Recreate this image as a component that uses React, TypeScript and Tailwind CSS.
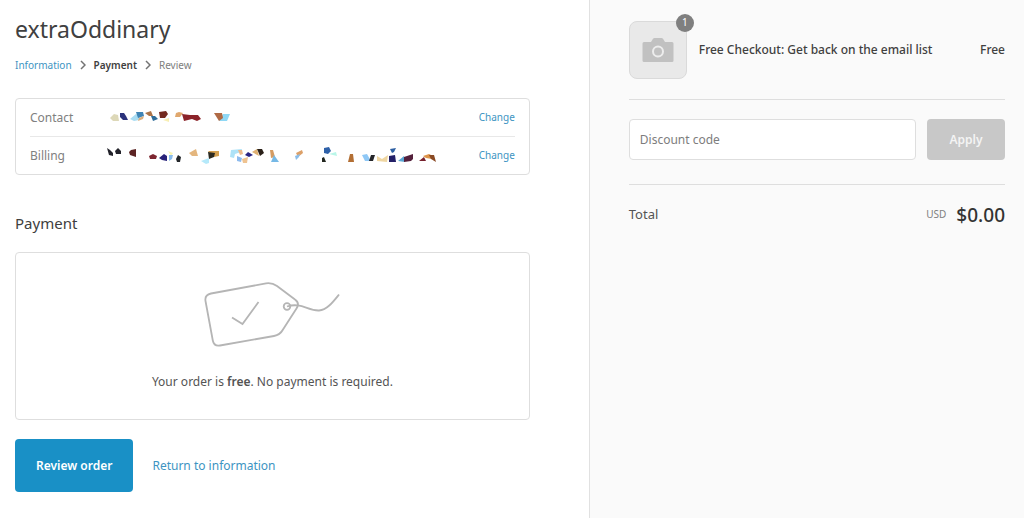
import React from "react";

type Shard = { points: string; fill: string };

const contactShards: Shard[] = [
  { points: "2,9 6,5 10,6 11,12 5,12", fill: "#ddd8b8" },
  { points: "12,4 16,4 18,7 20,11 15,11 12,8", fill: "#2c337c" },
  { points: "22,10 28,5 33,7 31,11 26,12", fill: "#a9dcf2" },
  { points: "28,3 35,3 36,7 30,9", fill: "#3f84b5" },
  { points: "31,9 36,7 35,10 30,12", fill: "#dcae7c" },
  { points: "37,4 43,2 45,7 41,7", fill: "#ad7448" },
  { points: "43,7 47,7 50,10 45,12", fill: "#2f6c99" },
  { points: "51,3 58,2 60,5 57,9 52,9", fill: "#74291f" },
  { points: "55,11 61,9 61,13", fill: "#f8efb4" },
  { points: "67,8 68,4 71,3 75,4 72,8", fill: "#e0a86e" },
  { points: "74,5 82,6 90,6 93,10 89,12 84,10 76,12", fill: "#8b2329" },
  { points: "111,12 115,5 122,5 119,12", fill: "#8fd8f5" },
  { points: "106,4 114,4 115,9 111,12", fill: "#b06a45" },
];

const billingShards: Shard[] = [
  { points: "-1,1 2,3 5,6 5,9 1,8", fill: "#22222a" },
  { points: "7,4 10,1 13,4 13,7 8,7", fill: "#22222a" },
  { points: "21,5 23,3 28,2 28,10 22,8", fill: "#5c2524" },
  { points: "41,9 45,7 49,9 48,12 42,12", fill: "#7d2630" },
  { points: "51,11 56,7 59,9 59,14 54,13", fill: "#29227a" },
  { points: "60,4 65,6 63,9", fill: "#faf5b5" },
  { points: "61,8 65,8 64,12 61,14", fill: "#8bbdec" },
  { points: "68,12 70,8 73,10 72,15 69,15", fill: "#24272b" },
  { points: "81,6 88,2 90,9 84,9", fill: "#e4b67e" },
  { points: "100,4 111,4 111,9 106,10", fill: "#d3a050" },
  { points: "100,5 107,6 106,10 101,12", fill: "#2c2a20" },
  { points: "93,14 101,11 101,16 98,17", fill: "#b5e9fa" },
  { points: "122,10 123,3 134,2 133,5 127,7 126,11", fill: "#aee2f7" },
  { points: "129,9 134,11 133,15 129,14", fill: "#8ebbee" },
  { points: "130,3 134,3 135,7 132,8", fill: "#edb98a" },
  { points: "134,12 140,10 139,16 135,16", fill: "#efc391" },
  { points: "137,8 140,5 145,8 141,10", fill: "#2b2484" },
  { points: "144,5 149,2 151,9", fill: "#dfb071" },
  { points: "149,2 154,2 156,6 152,9", fill: "#2a2018" },
  { points: "162,3 165,3 167,10 163,11", fill: "#d59c63" },
  { points: "166,8 171,15 163,15", fill: "#76b9e6" },
  { points: "188,6 194,3 195,6 190,10", fill: "#dca068" },
  { points: "187,9 192,7 191,10 188,13", fill: "#8abdea" },
  { points: "216,1 221,0 223,4 220,7 216,6", fill: "#2f61a9" },
  { points: "221,7 228,5 229,9", fill: "#b9f6e8" },
  { points: "214,15 214,11 216,10 218,15", fill: "#22261f" },
  { points: "240,15 242,7 245,7 246,15", fill: "#b36f34" },
  { points: "254,8 259,7 263,14 257,14", fill: "#8fc8f6" },
  { points: "261,14 263,8 267,8 265,14", fill: "#25262a" },
  { points: "269,14 269,9 274,12 280,8 279,15", fill: "#efd6a2" },
  { points: "282,2 288,1 286,5 284,6", fill: "#2d5fa2" },
  { points: "281,9 287,8 288,15 281,15", fill: "#242067" },
  { points: "290,14 296,9 297,15", fill: "#5ba6d3" },
  { points: "296,10 305,7 305,12 303,14 296,15", fill: "#54203c" },
  { points: "311,14 316,10 318,14", fill: "#76202c" },
  { points: "315,9 321,7 325,9 324,12 318,11", fill: "#dd9348" },
  { points: "321,8 326,8 328,15 323,12", fill: "#8a4a25" },
];

const Shards: React.FC<{ items: Shard[] }> = ({ items }) => (
  <svg
    width="332"
    height="18"
    viewBox="0 0 332 18"
    className="shrink-0 overflow-visible"
    aria-hidden="true"
  >
    {items.map((item) => (
      <polygon key={item.points} points={item.points} fill={item.fill} />
    ))}
  </svg>
);

const Chevron: React.FC = () => (
  <svg width="6" height="10" viewBox="0 0 6 10" fill="none" aria-hidden="true">
    <path d="M1 1l4 4-4 4" stroke="#737373" strokeWidth="1.5" />
  </svg>
);

const PriceTag: React.FC = () => (
  <svg
    width="136"
    height="66"
    viewBox="0 0 136 66"
    fill="none"
    stroke="#b5b5b5"
    strokeWidth="1.8"
    aria-hidden="true"
  >
    <path d="M7 11.5 62 1.4Q68 0.5 73 4L91 17.5Q96 21 92.500 26.500L79 47.500Q76 53 70 54L16 63.500Q10 64.500 8.800 58.500L1.500 19Q.5 13 7 11.500Z" />
    <circle cx="83" cy="24.500" r="3.300" />
    <path d="M83 24.500C97 20 104 29 115 28.500C123 28 129 20 135 12.500" />
    <path d="M28 35.500 38.500 42 54.500 20" />
  </svg>
);

const Camera: React.FC = () => (
  <svg width="32" height="24" viewBox="0 0 32 24" aria-hidden="true">
    <path
      d="M2 4h7l2-3.200Q11.500 0 12.500 0h7Q20.500 0 21 .8L23 4h7q1.500 0 1.500 1.500v17Q31.500 24 30 24H2Q.5 24 .5 22.500v-17Q.5 4 2 4Z"
      fill="#c1c1c1"
    />
    <circle cx="16" cy="13.500" r="5" fill="#c1c1c1" stroke="#ededed" strokeWidth="2" />
  </svg>
);

const reviewRows = [
  { label: "Contact", shards: contactShards },
  { label: "Billing", shards: billingShards },
];

const App: React.FC = () => {
  return (
    <div className="flex min-h-screen bg-white font-['Noto_Sans','Open_Sans',sans-serif] text-xs text-[#545454]">
      <main className="w-[57.5%] pt-[11px] pr-[59px] pb-6 pl-[15px]">
        <h1 className="text-[23px] leading-9 text-[#404040]">extraOddinary</h1>
        <nav aria-label="Breadcrumb" className="mt-2 text-[10px] leading-5">
          <ol className="flex items-center gap-2">
            <li>
              <a href="#information" className="text-[#3d94c2]">
                Information
              </a>
            </li>
            <li>
              <Chevron />
            </li>
            <li className="font-semibold text-[#404040]" aria-current="step">
              Payment
            </li>
            <li>
              <Chevron />
            </li>
            <li className="text-[#808080]">Review</li>
          </ol>
        </nav>

        <section className="mt-[23px] divide-y divide-[#e8e8e8] rounded border border-[#dedede] px-3.5">
          {reviewRows.map((row) => (
            <div key={row.label} className="flex h-[38px] items-center last:h-[37px]">
              <span className="w-[78px] shrink-0 text-xs text-[#808080]">{row.label}</span>
              <Shards items={row.shards} />
              <a
                href="#information"
                aria-label={`Change ${row.label.toLowerCase()}`}
                className="ml-auto text-[10px] text-[#3d94c2]"
              >
                Change
              </a>
            </div>
          ))}
        </section>

        <h2 className="mt-9 text-[15px] leading-6 text-[#404040]">Payment</h2>
        <section className="mt-[17px] flex h-[168px] flex-col items-center rounded border border-[#dedede] pt-[29px]">
          <PriceTag />
          <p className="mt-6 leading-5">
            Your order is <strong className="font-semibold">free</strong>. No payment is required.
          </p>
        </section>

        <div className="mt-[19px] flex items-center gap-[19px]">
          <button
            type="button"
            className="h-[53px] rounded bg-[#1990c6] px-[21px] font-semibold text-white"
          >
            Review order
          </button>
          <a href="#information" className="text-[#3d94c2]">
            Return to information
          </a>
        </div>
      </main>

      <aside className="flex-1 border-l border-[#e1e1e1] bg-[#fafafa] pt-[21px] pr-[19px] pl-[39px]">
        <div className="flex items-center border-b border-[#dedede] pb-5">
          <div className="relative flex size-[58px] shrink-0 items-center justify-center rounded-lg border border-[#dadada] bg-[#e9e9e9]">
            <Camera />
            <span className="absolute -top-2 -right-2 flex size-[18px] items-center justify-center rounded-full bg-[#7f7f7f] text-[10px] text-white">
              1
            </span>
          </div>
          <span className="ml-3 font-medium text-[#404040]">
            Free Checkout: Get back on the email list
          </span>
          <span className="ml-auto font-medium text-[#404040]">Free</span>
        </div>

        <form className="flex gap-[11px] border-b border-[#dedede] pt-[19px] pb-6">
          <input
            type="text"
            aria-label="Discount code"
            placeholder="Discount code"
            className="h-[41px] min-w-0 flex-1 rounded border border-[#dedede] bg-white px-2.5 placeholder:text-[#7d7d7d]"
          />
          <button
            type="button"
            disabled
            className="h-[41px] w-[78px] rounded bg-[#c8c8c8] text-xs font-semibold text-[#f4f4f4]"
          >
            Apply
          </button>
        </form>

        <div className="mt-4 flex items-center">
          <span className="text-[13px]">Total</span>
          <span className="ml-auto text-[10px] text-[#808080]">USD</span>
          <span className="ml-2.5 text-[19px] leading-7 font-medium text-[#333333]">$0.00</span>
        </div>
      </aside>
    </div>
  );
};

export default App;
